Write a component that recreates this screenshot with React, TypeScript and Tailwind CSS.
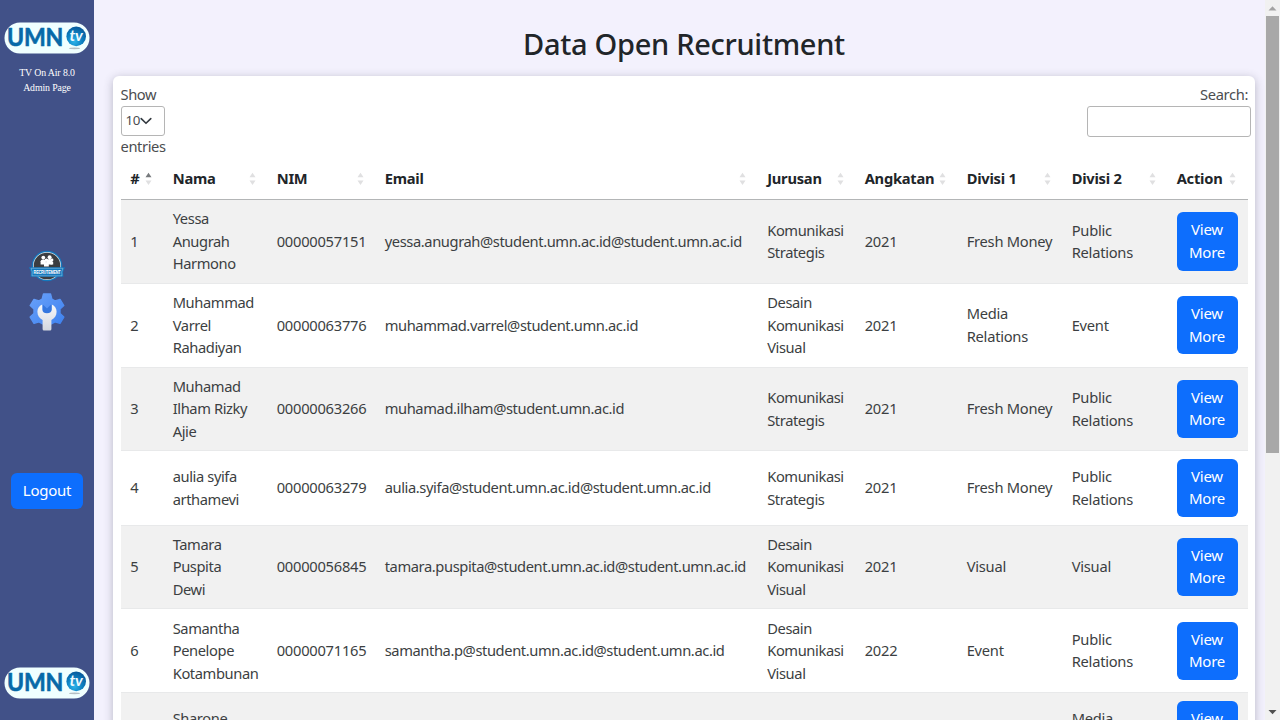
import React from "react";

type Row = {
  no: number;
  nama: string[];
  nim: string;
  email: string;
  jurusan: string[];
  angkatan: string;
  divisi1: string[];
  divisi2: string[];
};

const rows: Row[] = [
  { no: 1, nama: ["Yessa", "Anugrah", "Harmono"], nim: "00000057151", email: "yessa.anugrah@student.umn.ac.id@student.umn.ac.id", jurusan: ["Komunikasi", "Strategis"], angkatan: "2021", divisi1: ["Fresh Money"], divisi2: ["Public", "Relations"] },
  { no: 2, nama: ["Muhammad", "Varrel", "Rahadiyan"], nim: "00000063776", email: "muhammad.varrel@student.umn.ac.id", jurusan: ["Desain", "Komunikasi", "Visual"], angkatan: "2021", divisi1: ["Media", "Relations"], divisi2: ["Event"] },
  { no: 3, nama: ["Muhamad", "Ilham Rizky", "Ajie"], nim: "00000063266", email: "muhamad.ilham@student.umn.ac.id", jurusan: ["Komunikasi", "Strategis"], angkatan: "2021", divisi1: ["Fresh Money"], divisi2: ["Public", "Relations"] },
  { no: 4, nama: ["aulia syifa", "arthamevi"], nim: "00000063279", email: "aulia.syifa@student.umn.ac.id@student.umn.ac.id", jurusan: ["Komunikasi", "Strategis"], angkatan: "2021", divisi1: ["Fresh Money"], divisi2: ["Public", "Relations"] },
  { no: 5, nama: ["Tamara", "Puspita", "Dewi"], nim: "00000056845", email: "tamara.puspita@student.umn.ac.id@student.umn.ac.id", jurusan: ["Desain", "Komunikasi", "Visual"], angkatan: "2021", divisi1: ["Visual"], divisi2: ["Visual"] },
  { no: 6, nama: ["Samantha", "Penelope", "Kotambunan"], nim: "00000071165", email: "samantha.p@student.umn.ac.id@student.umn.ac.id", jurusan: ["Desain", "Komunikasi", "Visual"], angkatan: "2022", divisi1: ["Event"], divisi2: ["Public", "Relations"] },
  { no: 7, nama: ["Sharone"], nim: "", email: "", jurusan: [], angkatan: "", divisi1: [], divisi2: ["Media", "Relations"] },
];

const headers = ["#", "Nama", "NIM", "Email", "Jurusan", "Angkatan", "Divisi 1", "Divisi 2", "Action"];

const columns = "grid grid-cols-[42.5px_104px_108px_382.5px_97.5px_102px_105px_105px_80.5px]";

function Logo() {
  return (
    <svg width="86" height="32" viewBox="0 0 86 32" className="block">
      <defs>
        <radialGradient id="ball" cx="0.4" cy="0.75" r="0.75">
          <stop offset="0" stopColor="#2db4ea" />
          <stop offset="0.55" stopColor="#0b7fc0" />
          <stop offset="1" stopColor="#075a9c" />
        </radialGradient>
      </defs>
      <rect x="0.5" y="0.5" width="85" height="31" rx="15.5" fill="#f0ffff" />
      <text x="3" y="24.3" textLength="56" lengthAdjust="spacingAndGlyphs" fontFamily="Lato, sans-serif" fontWeight="700" fontSize="24.6" fill="#0769a8" stroke="#0769a8" strokeWidth="0.6">UMN</text>
      <ellipse cx="70.5" cy="26.3" rx="5.5" ry="0.9" fill="#b5bfc4" />
      <circle cx="72.2" cy="14.4" r="9.8" fill="url(#ball)" />
      <text x="65.6" y="19" textLength="13" lengthAdjust="spacingAndGlyphs" fontFamily="Lato, sans-serif" fontWeight="700" fontStyle="italic" fontSize="15" fill="#eefaff">tv</text>
    </svg>
  );
}

function RecruitmentIcon() {
  return (
    <svg width="36" height="32" viewBox="0 0 36 32" className="block">
      <circle cx="18" cy="16" r="15.3" fill="#1478bd" />
      <circle cx="18" cy="16" r="14" fill="#dbe6ee" />
      <circle cx="18" cy="16" r="13.3" fill="#3b3d40" />
      <g fill="#ffffff">
        <circle cx="14.3" cy="7.6" r="1.9" />
        <circle cx="20.6" cy="7.2" r="2" />
        <path d="M11.6 14.6v-3.4q0-1.8 2.6-1.8t2.6 1.8v3.4z" />
        <path d="M18 14.6v-3.8q0-1.8 2.6-1.8t2.6 1.8v3.8z" />
        <circle cx="17.4" cy="10.2" r="1.8" />
        <path d="M15 16.6v-2.8q0-1.8 2.4-1.8t2.4 1.8v2.8z" />
        <circle cx="23" cy="10" r="1.4" />
        <path d="M21.4 14.6v-2q0-1.2 1.6-1.2t1.2 1.2v2z" />
      </g>
      <path d="M0 17.2H36L34 22L34.4 26.8H1.6L2 22Z" fill="#1478bd" />
      <path d="M2 18.3H34L32.7 22L33 25.8H3L3.3 22Z" fill="none" stroke="#b4d6ec" strokeWidth="0.45" />
      <text x="4.6" y="24.1" textLength="26.8" lengthAdjust="spacingAndGlyphs" fontFamily="Liberation Sans, sans-serif" fontWeight="700" fontSize="5.2" fill="#ffffff">RECRUTEMENT</text>
    </svg>
  );
}

function SettingsIcon() {
  return (
    <svg width="36" height="38" viewBox="0 0 36 38" className="block">
      <defs>
        <linearGradient id="gear" x1="0" y1="0" x2="1" y2="1">
          <stop offset="0" stopColor="#69a1fa" />
          <stop offset="1" stopColor="#3f82ef" />
        </linearGradient>
        <linearGradient id="wrench" x1="0" y1="0" x2="0" y2="1">
          <stop offset="0" stopColor="#f7f8fa" />
          <stop offset="1" stopColor="#d3d7df" />
        </linearGradient>
      </defs>
      <path
        d="M14.5 1h7l1.3 5 3.2 1.8 5-1.4 3.8 6.2-3.8 3.5v4.4l3.8 3.6-3.8 6.2-5-1.4-3.2 1.8h-9.6L10 28.9l-5 1.4-3.8-6.2L5 20.5v-4.4l-3.8-3.5L5 6.4l5 1.4L13.2 6z"
        fill="url(#gear)"
        stroke="url(#gear)"
        strokeWidth="1.4"
        strokeLinejoin="round"
      />
      <path d="M13.8 11.6L18 15.5L22.2 11.6L27 16.1L23 22H14z" fill="#3577df" />
      <path
        d="M13.2 11.6V16.6Q13.4 20.2 18 20.2T22.8 16.6V11.6C26 13 27.6 15.6 27.6 18.8C27.6 22.6 25.6 25.3 22.4 26.9V36Q22.4 37.5 21 37.5H15Q13.6 37.5 13.6 36V26.9C10.4 25.3 8.4 22.6 8.4 18.8C8.4 15.6 10 13 13.2 11.6Z"
        fill="url(#wrench)"
      />
    </svg>
  );
}

function SortArrows({ active }: { active?: boolean }) {
  return (
    <svg width="7" height="14" viewBox="0 0 7 14" className="block">
      <path d="M0.5 5.2L3.5 0.7L6.5 5.2Z" fill={active ? "#777a7d" : "#e0e0e1"} />
      <path d="M0.5 8.6L3.5 13.1L6.5 8.6Z" fill="#e0e0e1" />
    </svg>
  );
}

function Cell({ lines, tight }: { lines: string[]; tight?: boolean }) {
  return (
    <div className={`flex flex-col justify-center whitespace-nowrap pb-[0.6px] pl-[9.7px] ${tight ? "tracking-[-0.4px]" : ""}`}>
      {lines.map((line) => (
        <span key={line} className="block">{line}</span>
      ))}
    </div>
  );
}

function Sidebar() {
  return (
    <aside className="flex h-full w-[94px] shrink-0 flex-col items-center bg-[#415188]">
      <div className="mt-[22px]"><Logo /></div>
      <p className="mt-[11px] text-center font-['Liberation_Serif',serif] text-[9.8px] leading-[15px] tracking-[-0.1px] text-white">
        TV On Air 8.0<br />Admin Page
      </p>
      <nav className="mt-[154.5px] flex flex-col items-center gap-[11px]">
        <RecruitmentIcon />
        <SettingsIcon />
      </nav>
      <button className="mt-[142.5px] h-[36px] w-[72px] rounded-[6px] bg-[#0d6efd] pb-px text-[15px] text-white">Logout</button>
      <div className="mt-auto mb-[21px]"><Logo /></div>
    </aside>
  );
}

function Scrollbar() {
  return (
    <div className="flex h-full w-[15px] shrink-0 flex-col items-center bg-[#f1f1f1]">
      <svg width="15" height="16" viewBox="0 0 15 16" className="block"><path d="M3.5 10.5L7.5 6.3L11.5 10.5Z" fill="#a3a3a3" /></svg>
      <div className="h-[437px] w-[13px] bg-[#a8a8a8]" />
      <svg width="15" height="16" viewBox="0 0 15 16" className="mt-auto block"><path d="M3.5 6L7.5 10.2L11.5 6Z" fill="#505050" /></svg>
    </div>
  );
}

export default function App() {
  return (
    <div className="flex h-[720px] w-[1280px] overflow-hidden bg-[#f3f1fd] font-['Noto_Sans',sans-serif] text-[14.7px] leading-[22.6px] tracking-[-0.25px] text-[#212529]">
      <Sidebar />
      <main className="flex min-w-0 flex-1 flex-col pl-[19px] pr-[10px]">
        <h1 className="mt-[26px] mb-[14px] text-center text-[29px] font-medium leading-[36px] tracking-[-0.3px]">Data Open Recruitment</h1>
        <section className="h-[1200px] w-[1142px] shrink-0 rounded-[6px] bg-white pt-[7px] pl-[7.5px] shadow-[0_2px_10px_rgba(60,60,80,0.32)]">
          <div className="flex h-[75.5px] justify-between text-[#4b4d50]">
            <div className="flex flex-col tracking-[-0.4px]">
              <span className="mb-[0.4px]">Show</span>
              <div className="flex h-[29.6px] w-[44.6px] items-center rounded-[3px] border border-[#b5b5b5] pl-[4px] text-[13.4px]">
                <span>10</span>
                <svg width="12" height="8" viewBox="0 0 12 8" className="block"><path d="M1.2 1.6L6 6.3L10.8 1.6" fill="none" stroke="#343a40" strokeWidth="1.6" strokeLinecap="round" strokeLinejoin="round" /></svg>
              </div>
              <span className="-mt-[0.6px]">entries</span>
            </div>
            <div className="flex flex-col items-end pr-[4px]">
              <span className="mb-[0.4px] pr-[3px] tracking-[-0.35px]">Search:</span>
              <input aria-label="Search" className="h-[31px] w-[164px] rounded-[3px] border border-[#b5b5b5] bg-white" />
            </div>
          </div>
          <div className="w-[1127px]">
            <div className={`${columns} h-[41.5px] border-b border-[#b3b5b6] font-bold`}>
              {headers.map((h, i) => (
                <div key={h} className="flex items-center justify-between pl-[9.7px] pr-[11.4px]">
                  <span className="whitespace-nowrap">{h}</span>
                  <SortArrows active={i === 0} />
                </div>
              ))}
            </div>
            {rows.map((r) => (
              <div
                key={r.no}
                className={`${columns} border-b border-[#e8e9ea] text-[#3c3f42] ${r.no % 2 ? "bg-[#f1f1f1]" : "bg-white"} ${r.nama.length === 3 ? "h-[83.8px]" : "h-[74.2px]"}`}
              >
                <Cell lines={r.no < 7 ? [String(r.no)] : []} />
                {r.no < 7 ? <Cell lines={r.nama} tight /> : <div className="pl-[9.7px] pt-[14px] tracking-[-0.4px]">{r.nama[0]}</div>}
                <Cell lines={[r.nim]} />
                <Cell lines={[r.email]} tight />
                <Cell lines={r.jurusan} tight />
                <Cell lines={[r.angkatan]} />
                <Cell lines={r.divisi1} />
                <Cell lines={r.divisi2} />
                <div className="flex items-center pl-[9.5px]">
                  <button className="h-[58.4px] w-[61px] rounded-[6px] bg-[#0d6efd] pb-px text-[15px] text-white">View<br />More</button>
                </div>
              </div>
            ))}
          </div>
        </section>
      </main>
      <Scrollbar />
    </div>
  );
}
